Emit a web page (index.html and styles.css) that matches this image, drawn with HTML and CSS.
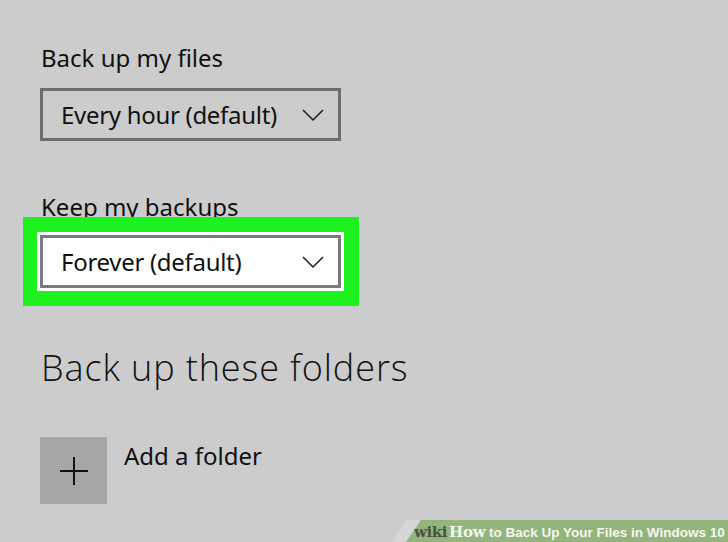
FILE: index.html
```html
<!DOCTYPE html>
<html>
<head>
<meta charset="utf-8">
<link rel="stylesheet" href="styles.css">
</head>
<body>
<div class="page">
  <div class="label first">Back up my files</div>
  <div class="dropdown">
    <span class="dd-text">Every hour (default)</span>
    <svg class="chev" width="22" height="13" viewBox="0 0 22 13"><path d="M1 1 L11 11 L21 1" fill="none" stroke="#1a1a1a" stroke-width="1.5"/></svg>
  </div>
  <div class="label second">Keep my backups</div>
  <div class="highlight">
    <div class="ring">
      <div class="dropdown white">
        <span class="dd-text">Forever (default)</span>
        <svg class="chev" width="22" height="13" viewBox="0 0 22 13"><path d="M1 1 L11 11 L21 1" fill="none" stroke="#1a1a1a" stroke-width="1.5"/></svg>
      </div>
    </div>
  </div>
  <h2 class="heading">Back up these folders</h2>
  <div class="add-row">
    <div class="tile">
      <svg width="30" height="30" viewBox="0 0 30 30"><path d="M15 1 V29 M1 15 H29" stroke="#111" stroke-width="2" fill="none"/></svg>
    </div>
    <div class="add-text">Add a folder</div>
  </div>
</div>
<div class="wiki-band">
  <div class="wiki">
    <span class="w-wiki">wiki</span><span class="w-how">How</span><span class="w-title"> to Back Up Your Files in Windows 10</span>
  </div>
</div>
</body>
</html>
```
FILE: styles.css
```css
html, body {
  margin: 0;
  padding: 0;
  width: 728px;
  height: 542px;
  overflow: hidden;
  background: #cccccc;
}
body {
  position: relative;
  font-family: "Noto Sans", "Open Sans", sans-serif;
  color: #111;
}
.page {
  padding: 0 0 0 40px;
}
.label {
  font-size: 24px;
  line-height: 32px;
  height: 32px;
  padding-left: 1px;
}
.label.first {
  padding-top: 42px;
}
.dropdown {
  box-sizing: border-box;
  width: 301px;
  height: 53px;
  border: 3px solid #6e6e6e;
  display: flex;
  align-items: center;
  justify-content: space-between;
  padding: 0 14px 0 18px;
  margin-top: 14px;
}
.dropdown.white {
  background: #fff;
  border-color: #7a7a7a;
  margin-top: 0;
}
.dd-text {
  font-size: 24px;
  line-height: 30px;
  letter-spacing: -0.3px;
}
.chev {
  display: block;
  margin-top: 2px;
}
.label.second {
  margin-top: 50px;
}
.highlight {
  position: relative;
  background: #1ef21e;
  margin-left: -17px;
  width: 336px;
  box-sizing: border-box;
  padding: 15px 15px 15px 14px;
  margin-top: -6px;
}
.ring {
  border: 3px solid #fff;
  background: #fff;
}
.heading {
  font-family: "Open Sans", "Noto Sans", sans-serif;
  font-size: 36px;
  font-weight: 300;
  line-height: 44px;
  letter-spacing: 0.9px;
  margin: 40px 0 0 0;
  padding-left: 1px;
}
.add-row {
  display: flex;
  margin-top: 47px;
}
.tile {
  width: 67px;
  height: 67px;
  background: #a6a6a6;
  display: flex;
  align-items: center;
  justify-content: center;
}
.add-text {
  font-size: 24px;
  line-height: 32px;
  margin-left: 17px;
  margin-top: 3px;
}
.wiki-band {
  position: absolute;
  right: 0;
  bottom: 0;
  width: 336px;
  height: 22px;
  background: #d6d6d6;
  clip-path: polygon(14px 0, 100% 0, 100% 100%, 0 100%);
}
.wiki {
  margin-left: 14px;
  height: 22px;
  background: #93b57c;
  clip-path: polygon(15px 0, 100% 0, 100% 100%, 0 100%);
  padding-left: 8px;
  box-sizing: border-box;
  line-height: 23px;
  font-weight: bold;
  white-space: nowrap;
}
.w-wiki, .w-how {
  font-family: "DejaVu Serif", "Liberation Serif", serif;
  font-size: 15px;
}
.w-wiki { color: #4a5245; letter-spacing: -0.4px; }
.w-how { color: #f4f7f0; letter-spacing: -0.3px; margin-left: 2px; }
.w-title {
  font-family: "Liberation Sans", Arial, sans-serif;
  font-size: 13.5px;
  color: #f4f7f0;
}
```
